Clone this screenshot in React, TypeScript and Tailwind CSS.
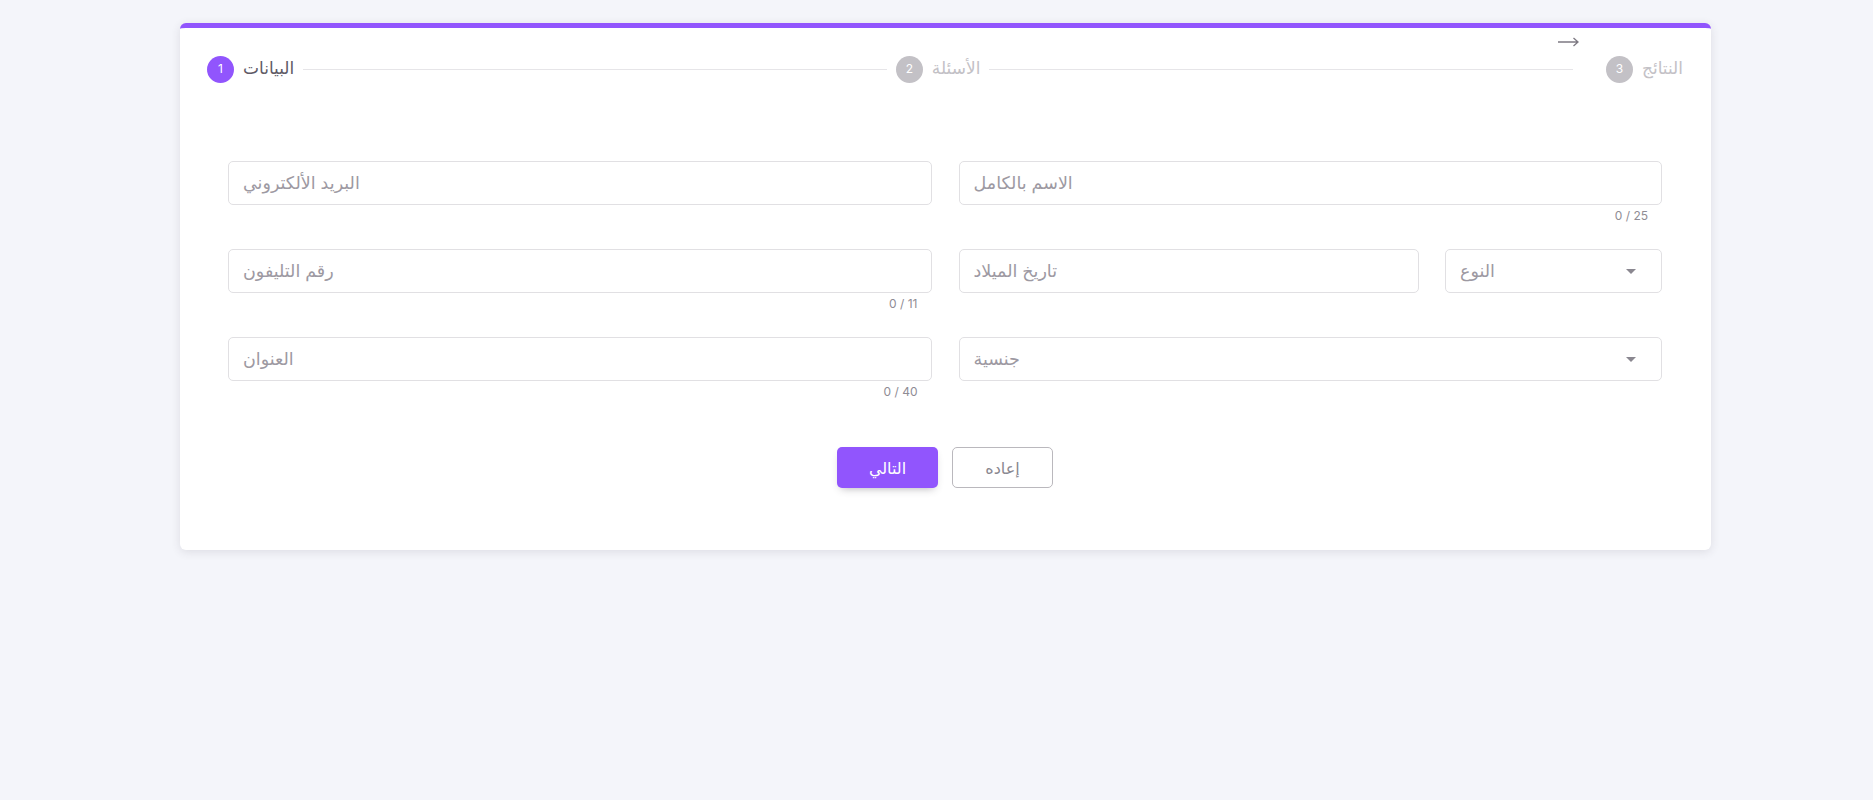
import React from "react";

const STEPS = [
  { n: 1, label: "البيانات", active: true },
  { n: 2, label: "الأسئلة", active: false },
  { n: 3, label: "النتائج", active: false },
];

function Step({ n, label, active }: { n: number; label: string; active: boolean }) {
  return (
    <div className="flex items-center gap-[9px]">
      <span
        className={
          active
            ? "flex h-[27px] w-[27px] items-center justify-center rounded-full bg-[#9155fd] text-[12px] text-white"
            : "flex h-[27px] w-[27px] items-center justify-center rounded-full bg-[#c3c1c6] text-[12px] text-white"
        }
      >
        {n}
      </span>
      <span
        className={
          active
            ? "text-[17px] font-medium text-[#5e5a66]"
            : "text-[17px] font-medium text-[#c3c1c6]"
        }
      >
        {label}
      </span>
    </div>
  );
}

function Field({ placeholder, counter, select }: { placeholder: string; counter?: string; select?: boolean }) {
  return (
    <div className="flex flex-col">
      <div className="flex h-[44px] items-center justify-between rounded-[5px] border border-[#e1e0e3] bg-white pl-[14px] pr-[24px]">
        <span className="text-[17.5px] text-[#9d99a2]">{placeholder}</span>
        {select && (
          <svg width="10" height="5" viewBox="0 0 10 5" className="mr-[1px]">
            <path d="M0 0 L10 0 L5 5 Z" fill="#8a8790" />
          </svg>
        )}
      </div>
      {counter && (
        <div className="mt-[3px] pr-[14px] text-right text-[12px] leading-[15px] text-[#8f8c94]">{counter}</div>
      )}
    </div>
  );
}

export default function App() {
  return (
    <div className="min-h-[800px] bg-[#f4f5fa] pt-[23px]" style={{ fontFamily: "Inter, 'Noto Sans', 'DejaVu Sans', sans-serif" }}>
      <div className="relative ml-[180px] h-[527px] w-[1531px] rounded-[6px] border-t-[5px] border-[#9155fd] bg-white shadow-[0_2px_10px_0_rgba(58,53,65,0.12)]">
        {/* سهم صغير فوق الخط */}
        <svg className="absolute left-[1378px] top-[9px]" width="21" height="10" viewBox="0 0 21 10">
          <path d="M0 5 H20 M15.5 1 L20 5 L15.5 9" stroke="#7d7982" strokeWidth="1.3" fill="none" />
        </svg>

        <div className="flex h-[55px] items-center pl-[27px] pr-[28px] pt-[27px]">
          <Step {...STEPS[0]} />
          <div className="mx-[9px] h-px flex-1 bg-[#e6e5e8]" />
          <Step {...STEPS[1]} />
          <div className="ml-[9px] mr-[33px] h-px flex-1 bg-[#e6e5e8]" />
          <Step {...STEPS[2]} />
        </div>

        <div className="mt-[78px] pl-[48px] pr-[49px]">
          <div className="grid h-[88px] grid-cols-2 gap-x-[27px]">
            <Field placeholder="البريد الألكتروني" />
            <Field placeholder="الاسم بالكامل" counter="0 / 25" />
          </div>
          <div className="grid h-[88px] grid-cols-2 gap-x-[27px]">
            <Field placeholder="رقم التليفون" counter="0 / 11" />
            <div className="grid grid-cols-[1fr_217px] gap-x-[26px]">
              <Field placeholder="تاريخ الميلاد" />
              <Field placeholder="النوع" select />
            </div>
          </div>
          <div className="grid h-[88px] grid-cols-2 gap-x-[27px]">
            <Field placeholder="العنوان" counter="0 / 40" />
            <Field placeholder="جنسية" select />
          </div>

          <div className="mt-[22px] flex justify-center gap-[14px]">
            <button className="h-[41px] w-[101px] rounded-[5px] bg-[#9155fd] text-[16px] text-white shadow-[0_4px_8px_-4px_rgba(58,53,65,0.42)]">
              التالي
            </button>
            <button className="h-[41px] w-[101px] rounded-[5px] border border-[#bab8bd] bg-white text-[16px] text-[#8a8790]">
              إعاده
            </button>
          </div>
        </div>
      </div>
    </div>
  );
}
